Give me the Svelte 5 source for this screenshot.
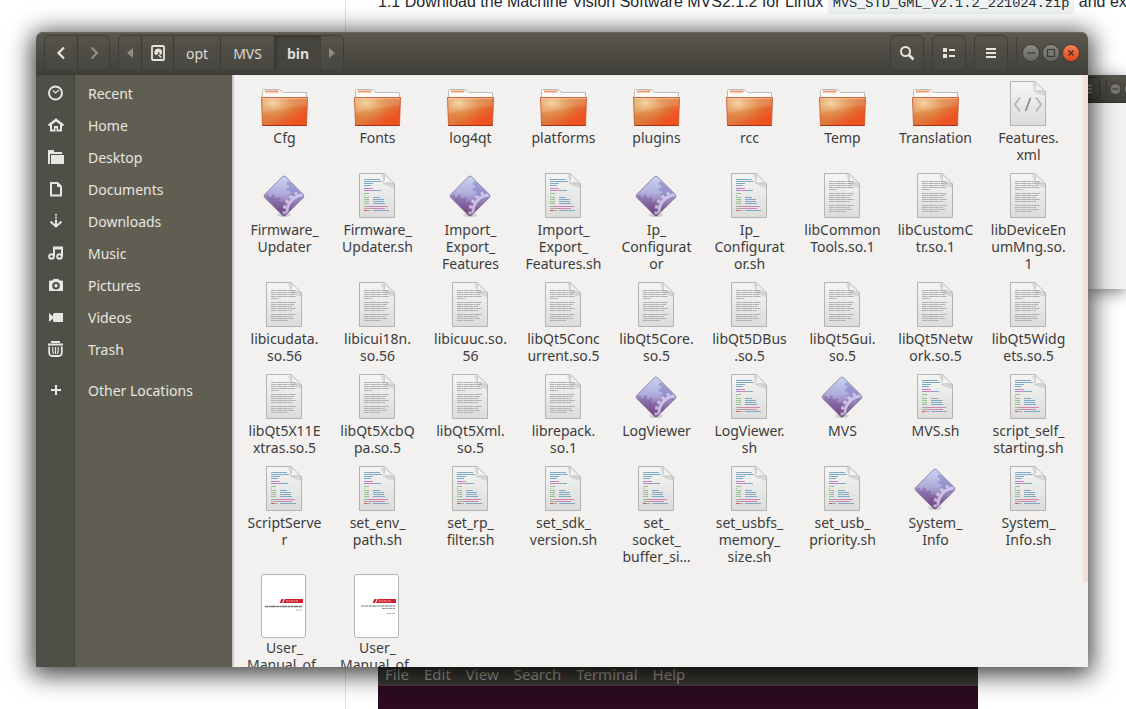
<script>
  const places = [
    ['recent', 'Recent'],
    ['home', 'Home'],
    ['desktop', 'Desktop'],
    ['documents', 'Documents'],
    ['downloads', 'Downloads'],
    ['music', 'Music'],
    ['pictures', 'Pictures'],
    ['videos', 'Videos'],
    ['trash', 'Trash'],
    ['other', 'Other Locations']
  ];

  // kind, then the label split at its line breaks with "|"
  const files = [
    ['folder', 'Cfg'],
    ['folder', 'Fonts'],
    ['folder', 'log4qt'],
    ['folder', 'platforms'],
    ['folder', 'plugins'],
    ['folder', 'rcc'],
    ['folder', 'Temp'],
    ['folder', 'Translation'],
    ['xml', 'Features.|xml'],
    ['app', 'Firmware_|Updater'],
    ['script', 'Firmware_|Updater.sh'],
    ['app', 'Import_|Export_|Features'],
    ['script', 'Import_|Export_|Features.sh'],
    ['app', 'Ip_|Configurat|or'],
    ['script', 'Ip_|Configurat|or.sh'],
    ['text', 'libCommon|Tools.so.1'],
    ['text', 'libCustomC|tr.so.1'],
    ['text', 'libDeviceEn|umMng.so.|1'],
    ['text', 'libicudata.|so.56'],
    ['text', 'libicui18n.|so.56'],
    ['text', 'libicuuc.so.|56'],
    ['text', 'libQt5Conc|urrent.so.5'],
    ['text', 'libQt5Core.|so.5'],
    ['text', 'libQt5DBus|.so.5'],
    ['text', 'libQt5Gui.|so.5'],
    ['text', 'libQt5Netw|ork.so.5'],
    ['text', 'libQt5Widg|ets.so.5'],
    ['text', 'libQt5X11E|xtras.so.5'],
    ['text', 'libQt5XcbQ|pa.so.5'],
    ['text', 'libQt5Xml.|so.5'],
    ['text', 'librepack.|so.1'],
    ['app', 'LogViewer'],
    ['script', 'LogViewer.|sh'],
    ['app', 'MVS'],
    ['script', 'MVS.sh'],
    ['script', 'script_self_|starting.sh'],
    ['script', 'ScriptServe|r'],
    ['script', 'set_env_|path.sh'],
    ['script', 'set_rp_|filter.sh'],
    ['script', 'set_sdk_|version.sh'],
    ['script', 'set_|socket_|buffer_si…'],
    ['script', 'set_usbfs_|memory_|size.sh'],
    ['script', 'set_usb_|priority.sh'],
    ['app', 'System_|Info'],
    ['script', 'System_|Info.sh'],
    ['pdf', 'User_|Manual_of_'],
    ['pdf2', 'User_|Manual_of_']
  ].map(([kind, label]) => ({ kind, lines: label.split('|') }));

  const B = '#7fa9c4', P = '#a884d0', K = '#d183b4', G = '#8bcf86', N = '#a8aaa8', R = '#d8505c';
  // x, y, width, colour
  const code = [
    [10, 9, 16, B], [10, 11, 18, B], [10, 13, 9, B], [10, 15, 7, B],
    [10, 18, 4, P], [14, 18, 5, K], [10, 20, 4, P], [14, 20, 5, K], [19, 20, 8, B],
    [10, 23, 3, G], [13, 23, 2, N], [10, 25, 1, N],
    [10, 27, 3, G], [13, 27, 2, N], [19, 27, 7, B],
    [10, 29, 3, G], [13, 29, 2, N], [19, 29, 11, B],
    [10, 31, 3, G], [13, 31, 2, N], [19, 31, 11, B],
    [10, 33, 3, G], [13, 33, 2, N], [19, 33, 12, B],
    [10, 36, 4, N], [14, 36, 20, K], [10, 38, 7, N], [17, 38, 14, K],
    [10, 40, 3, R], [13, 40, 4, N], [19, 40, 16, B]
  ];
  const prose = [
    [11, 25], [13, 25], [15, 23], [17, 25], [19, 8],
    [23, 25], [25, 23], [27, 21], [29, 25], [31, 21],
    [35, 25], [37, 21], [39, 23], [41, 17]
  ];
  const menus = ['File', 'Edit', 'View', 'Search', 'Terminal', 'Help'];
</script>

{#snippet sheet()}
  <path d="M5 49H42" stroke="#000" stroke-opacity=".1" />
  <path d="M5.500 3.500H30L40.500 14V47.500H5.500Z" fill="url(#paper)" stroke="#b4b4b2" />
  <path d="M27 5L31 15L40 18V14L30 4Z" fill="#000" opacity=".1" />
  <path d="M30 3.500C31 7 30.500 10 29.500 13.500C33 12 37 12.500 40.500 14Z" fill="url(#fold)" stroke="#c0c0be" stroke-width=".8" />
{/snippet}

{#snippet fileIcon(kind)}
  {#if kind === 'pdf' || kind === 'pdf2'}
    <svg class="thumb" width="47" height="64" viewBox="0 0 47 64" aria-hidden="true">
      <rect x=".5" y="2.500" width="44" height="63" rx="2.500" fill="#fff" stroke="#b3b3b0" />
      <path d="M20.500 27H23L21 31H18.500ZM24 27H42V31H22Z" fill="#d0202c" />
      <path d="M25 29H37" stroke="#f0b0b2" stroke-dasharray="2 .5" />
      {#if kind === 'pdf'}
        <path d="M4 34.500H41" stroke="#777" stroke-width="1.500" stroke-dasharray="3 .4 2 .4 5 .5" />
        <path d="M35 38H41" stroke="#aaa" stroke-dasharray="2 .5" />
      {:else}
        <path d="M7 34H41" stroke="#777" stroke-dasharray="3 .5 4 .5" />
        <path d="M28 36.500H41" stroke="#999" stroke-dasharray="3 .5" />
        <path d="M33 41.500H41" stroke="#aaa" stroke-dasharray="2 .4" />
      {/if}
    </svg>
  {:else}
    <svg width="47" height="48" viewBox="0 0 47 48" aria-hidden="true">
      {#if kind === 'folder'}
        <path d="M1.500 20V12.500Q1.500 11.500 2.500 11.500H17.500Q19 11.500 20 13Q21 14.500 22.500 14.500H45.500V20Z" fill="#fafaf9" stroke="#babab7" />
        <path d="M4 13.500H17.500" stroke="#f19a6c" stroke-width="2" />
        <path d="M2 48.500H45" stroke="#000" stroke-opacity=".25" />
        <path d="M.5 19.500H46.500L45.500 47.500H1.500Z" fill="url(#orange)" />
        <path d="M.5 19.500H46.500L45.500 47.500H1.500Z" fill="url(#glow)" stroke="#c2532b" stroke-opacity=".8" />
        <path d="M1 20H46L45.700 28Q22 29 1.300 35.500Z" fill="#fff" opacity=".13" />
        <path d="M1 20.500H46" stroke="#fff" stroke-opacity=".3" />
        <path d="M1.500 47.500H45.500" stroke="#a5301a" />
      {:else if kind === 'app'}
        <ellipse cx="23" cy="45" rx="7" ry="2" fill="#000" opacity=".14" />
        <path d="M21.500 6.700Q23 5.300 24.500 6.700L42.300 24.500Q43.500 26 42.300 27.500L24.500 45.300Q23 46.700 21.500 45.300L3.700 27.500Q2.500 26 3.700 24.500Z" fill="url(#violet)" />
        <g clip-path="url(#diamond)" fill="none">
          <g stroke="#7a76bb" opacity=".5">
            <circle cx="42" cy="16" r="14" fill="#7a76bb" stroke="none" />
            <circle cx="42" cy="16" r="15" stroke-width="3" stroke-dasharray="3 3" />
          </g>
          <g stroke="#6e4b8d" opacity=".4">
            <circle cx="9" cy="41" r="14" fill="#6e4b8d" stroke="none" />
            <circle cx="9" cy="41" r="15" stroke-width="3" stroke-dasharray="3 3" />
          </g>
          <g stroke="#e0d8f6" opacity=".75">
            <circle cx="43" cy="42" r="17" stroke-width="3" />
            <circle cx="43" cy="42" r="20" stroke-width="3" stroke-dasharray="3 3" />
          </g>
        </g>
        <path d="M21.500 6.700Q23 5.300 24.500 6.700L42.300 24.500Q43.500 26 42.300 27.500L24.500 45.300Q23 46.700 21.500 45.300L3.700 27.500Q2.500 26 3.700 24.500Z" fill="none" stroke="#6c5386" stroke-opacity=".8" stroke-width=".8" />
      {:else}
        {@render sheet()}
        {#if kind === 'xml'}
          <path d="M15 19.500L10 26.500L15 33.500M31 19.500L36 26.500L31 33.500" fill="none" stroke="#b7b7b7" stroke-width="2" />
          <path d="M25.500 20L20.500 33" stroke="#858585" stroke-width="1.600" />
        {:else if kind === 'script'}
          {#each code as [x, y, w, color]}
            <rect {x} {y} width={w} height="1" fill={color} />
          {/each}
        {:else}
          {#each prose as [y, w]}
            <path d="M10 {y + 0.5}h{w}" stroke="#b0b0ae" stroke-dasharray="4 .4 2 .4 5 .4" />
          {/each}
        {/if}
      {/if}
    </svg>
  {/if}
{/snippet}

{#snippet placeIcon(kind)}
  <svg width="16" height="16" viewBox="0 0 16 16" fill="none" stroke="#e8e6e3" stroke-width="2" aria-hidden="true">
    {#if kind === 'recent'}
      <circle cx="7.500" cy="8" r="6.500" />
      <path d="M5 5.500L7.500 8L11 5" stroke-width="1.200" />
    {:else if kind === 'home'}
      <path d="M.5 8.500L8 2.500L15.500 8.500" />
      <path d="M2 7L8 3L14 7V14.500H2ZM4 7.500V12.500H6V9H10V12.500H12V7.500L8 4.500Z" fill="#e8e6e3" stroke="none" fill-rule="evenodd" />
      <path d="M6 9H10V14H6Z" fill="#e8e6e3" stroke="none" />
      <path d="M8 11V15" stroke="#4f4e47" stroke-width="1" />
    {:else if kind === 'desktop'}
      <path d="M0 1H6V3H14V5H2V15H0ZM3 6H16V15H3Z" fill="#e8e6e3" stroke="none" />
    {:else if kind === 'documents'}
      <path d="M3 2H9.500L13 5.500V14.500H3Z" />
      <path d="M9 2V6H13Z" fill="#e8e6e3" stroke="none" />
    {:else if kind === 'downloads'}
      <path d="M8 1V8" stroke-dasharray="1.500 1.200" />
      <path d="M8 8V13M2.500 8.500L8 13.500L13.500 8.500" />
    {:else if kind === 'music'}
      <path d="M6 11V2.500H14V11M6 3.500H14" />
      <circle cx="3.500" cy="11.500" r="2.300" />
      <circle cx="11.500" cy="11.500" r="2.300" />
    {:else if kind === 'pictures'}
      <path d="M1 4.500Q1 3.500 2 3.500H4.500L5.500 2H10.500L11.500 3.500H14Q15 3.500 15 4.500V14H1ZM8 5A3.800 3.800 0 1 0 8 12.600A3.800 3.800 0 1 0 8 5Z" fill="#e8e6e3" stroke="none" fill-rule="evenodd" />
      <circle cx="8" cy="8.800" r="1.700" fill="#e8e6e3" stroke="none" />
    {:else if kind === 'videos'}
      <path d="M1 4V13L5 9.500V11.500Q5 13 6.500 13H15V4H6.500Q5 4 5 5.500V7.500Z" fill="#e8e6e3" stroke="none" />
    {:else if kind === 'trash'}
      <path d="M0 3.500H15M3 1H12" />
      <path d="M1.200 5.500V12Q1.500 15 4 15H11Q13.500 15 13.800 12V5.500" stroke-width="1.800" />
      <path d="M5 6Q4 9 5.500 13M7.500 6V13M10 6Q11 9 9.500 13" stroke-width="1.200" />
    {:else}
      <path d="M8 3V13M3 8H13" />
    {/if}
  </svg>
{/snippet}

<svg class="defs" width="0" height="0" aria-hidden="true">
  <defs>
    <linearGradient id="paper" x1="0" y1="0" x2="0" y2="1">
      <stop offset="0" stop-color="#f5f5f4" /><stop offset="1" stop-color="#dcdcdb" />
    </linearGradient>
    <linearGradient id="fold" x1="0" y1="1" x2="1" y2="0">
      <stop offset="0" stop-color="#fff" /><stop offset="1" stop-color="#dededd" />
    </linearGradient>
    <linearGradient id="orange" x1="0" y1="0" x2="1" y2="1">
      <stop offset="0" stop-color="#df9450" /><stop offset=".5" stop-color="#df7a3c" /><stop offset=".8" stop-color="#ee5220" /><stop offset="1" stop-color="#e9501f" />
    </linearGradient>
    <radialGradient id="glow" cx=".25" cy=".2" r=".6">
      <stop offset="0" stop-color="#f5d69f" stop-opacity=".95" /><stop offset="1" stop-color="#e08a40" stop-opacity="0" />
    </radialGradient>
    <linearGradient id="violet" x1="0" y1="0" x2="0" y2="1">
      <stop offset="0" stop-color="#c9d6f4" /><stop offset=".45" stop-color="#b0abda" /><stop offset=".65" stop-color="#967fb6" /><stop offset="1" stop-color="#6b3a6d" />
    </linearGradient>
    <clipPath id="diamond">
      <path d="M23 6L43 26L23 46L3 26Z" />
    </clipPath>
  </defs>
</svg>

<div class="desktop">
  <article class="page">
    <p>1.1 Download the Machine Vision Software MVS2.1.2 for Linux <code>MVS_STD_GML_V2.1.2_221024.zip</code> and extract</p>
  </article>

  <section class="behind">
    <div class="behind-bar">
      <svg width="60" height="27" viewBox="0 0 60 27" aria-hidden="true">
        <path d="M0 2.500H8Q11.500 2.500 11.500 6V21Q11.500 24.500 8 24.500H0" fill="none" stroke="#35342f" />
        <path d="M0 10.500H4M0 14H4M0 17.500H4" stroke="#9a9992" stroke-width="1.500" />
        <path d="M18.500 5V23" stroke="#3a3934" />
        <circle cx="27.500" cy="14" r="5.500" fill="#77766f" stroke="#37362f" />
        <circle cx="41.500" cy="14" r="5.500" fill="#77766f" stroke="#37362f" />
        <path d="M24.500 14H30.500" stroke="#37362f" />
      </svg>
    </div>
  </section>

  <section class="terminal">
    <nav>
      {#each menus as menu}<button>{menu}</button>{/each}
    </nav>
  </section>

  <main class="window">
    <header>
      <div class="group">
        <button class="nav" aria-label="Back">
          <svg width="16" height="16" viewBox="0 0 16 16"><path d="M11 2.500L5.500 8L11 13.500" fill="none" stroke="#e8e5dc" stroke-width="2.200" /></svg>
        </button>
        <button class="nav" aria-label="Forward">
          <svg width="16" height="16" viewBox="0 0 16 16"><path d="M5.500 2.500L11 8L5.500 13.500" fill="none" stroke="#8f8d84" stroke-width="2.200" /></svg>
        </button>
      </div>
      <div class="group path">
        <button class="arrow" aria-label="Scroll path left">
          <svg width="6" height="10" viewBox="0 0 6 10"><path d="M6 0V10L0 5Z" fill="#8f8d84" /></svg>
        </button>
        <button class="disk" aria-label="Computer">
          <svg width="16" height="16" viewBox="0 0 16 16">
            <rect x="2" y="1" width="12" height="14" rx="1" fill="none" stroke="#e8e5dc" stroke-width="1.800" />
            <path d="M8 3.500A3.700 3.700 0 0 0 6 10.300L8.500 8.500L7.500 7.500L9.500 7V9.500L11 9.800A3.700 3.700 0 0 0 8 3.500Z" fill="#e8e5dc" />
            <path d="M8.500 10L11.500 12.500" stroke="#e8e5dc" stroke-width="1.500" />
          </svg>
        </button>
        <button class="crumb">opt</button>
        <button class="crumb">MVS</button>
        <button class="crumb current">bin</button>
        <button class="arrow plain" aria-label="Scroll path right">
          <svg width="6" height="10" viewBox="0 0 6 10"><path d="M0 0V10L6 5Z" fill="#8f8d84" /></svg>
        </button>
      </div>
      <div class="tools">
        <button class="tool" aria-label="Search">
          <svg width="16" height="16" viewBox="0 0 16 16" fill="none" stroke="#e8e5dc"><circle cx="6.500" cy="6.500" r="4.500" stroke-width="2" /><path d="M9.500 9.500L14.500 14.500" stroke-width="2.600" /></svg>
        </button>
        <button class="tool" aria-label="List view">
          <svg width="16" height="16" viewBox="0 0 16 16" fill="#e8e5dc"><path d="M2 3H6V7H2ZM8 4H14V6H8ZM2 9H6V13H2ZM8 10H14V12H8Z" /></svg>
        </button>
        <button class="tool" aria-label="Menu">
          <svg width="16" height="16" viewBox="0 0 16 16" fill="#e8e5dc"><path d="M3 3H13V5H3ZM3 7H13V9H3ZM3 11H13V13H3Z" /></svg>
        </button>
      </div>
      <div class="controls">
        <button aria-label="Minimise"><svg width="16" height="16" viewBox="0 0 16 16"><path d="M4 8H12" stroke="#3c3b37" stroke-width="1.200" /></svg></button>
        <button aria-label="Maximise"><svg width="16" height="16" viewBox="0 0 16 16"><rect x="4.500" y="4.500" width="7" height="7" fill="none" stroke="#3c3b37" stroke-width="1.200" /></svg></button>
        <button class="close" aria-label="Close"><svg width="16" height="16" viewBox="0 0 16 16"><path d="M5.500 5.500L10.500 10.500M10.500 5.500L5.500 10.500" stroke="#4c2a1b" stroke-width="1.300" /></svg></button>
      </div>
    </header>

    <div class="body">
      <aside>
        {#each places as [kind, name]}
          <button class="place" class:apart={kind === 'other'}>
            <span class="glyph">{@render placeIcon(kind)}</span>
            <span>{name}</span>
          </button>
        {/each}
      </aside>
      <div class="files">
        {#each files as file}
          <button class="file">
            {@render fileIcon(file.kind)}
            <span class="label">{#each file.lines as line, i}{#if i}<br />{/if}{line}{/each}</span>
          </button>
        {/each}
      </div>
    </div>
  </main>
</div>

<style>
  :global(body) {
    margin: 0;
    background: #fff;
  }
  .defs {
    position: absolute;
  }
  .desktop {
    position: relative;
    height: 100vh;
    min-height: 480px;
    overflow: hidden;
    font-family: 'Noto Sans', 'Open Sans', sans-serif;
    font-size: 14px;
  }
  button {
    font: inherit;
    color: inherit;
    background: none;
    border: 0;
    padding: 0;
    margin: 0;
  }
  svg {
    display: block;
    flex: none;
  }

  .page {
    height: 100%;
    margin-left: 345px;
    padding-left: 32px;
    border-left: 1px solid #dfe2e5;
    overflow: hidden;
  }
  .page p {
    margin: -10px 0 0;
    font: 16px/24px 'Liberation Sans', Arial, sans-serif;
    color: #24292e;
    white-space: nowrap;
  }
  .page code {
    padding: 3px 5px;
    border-radius: 4px;
    background: #f0f3f3;
    font-family: 'Liberation Mono', monospace;
    font-size: 85%;
  }

  .behind {
    position: absolute;
    left: 1088px;
    right: 0;
    top: 75px;
    height: 214px;
    background: #f2f1f0;
    box-shadow: 0 3px 16px rgba(0, 0, 0, 0.5);
  }
  .behind-bar {
    height: 27px;
    overflow: hidden;
    border-bottom: 1px solid #33322e;
    background: linear-gradient(#55534a, #403f3a);
  }

  .terminal {
    position: absolute;
    left: 378px;
    width: 600px;
    bottom: 0;
    height: 60px;
    background: #2c0a21;
  }
  .terminal nav {
    display: flex;
    align-items: end;
    gap: 15px;
    height: 36px;
    padding-left: 7px;
    border-bottom: 1px solid #43423c;
    background: #3a3934;
    color: #a09f98;
    font-size: 15px;
    line-height: 22px;
  }

  .window {
    position: absolute;
    inset: 32px 38px 42px 36px;
    display: flex;
    flex-direction: column;
    border-radius: 7px 7px 0 0;
    box-shadow: 0 4px 24px 4px rgba(0, 0, 0, 0.75);
    background: #f2f1f0;
  }
  header {
    display: flex;
    align-items: center;
    height: 42px;
    padding: 0 8px;
    border-bottom: 1px solid #3a3934;
    border-radius: 7px 7px 0 0;
    background: linear-gradient(#5b594e, #403f3a);
    box-shadow: inset 0 1px #69675c;
    color: #dfdbd2;
  }
  header button {
    display: flex;
    align-items: center;
    justify-content: center;
  }
  .group,
  .tool {
    height: 34px;
    border: 1px solid #3e3d37;
    border-radius: 5px;
    background: linear-gradient(#55534a, #474640);
  }
  .group {
    display: flex;
    margin-right: 8px;
    overflow: hidden;
  }
  .group button + button {
    border-left: 1px solid #3b3a35;
  }
  .nav {
    width: 32px;
  }
  .group .arrow {
    width: 22px;
  }
  .group button.plain {
    border-left: 0;
  }
  .group .disk {
    width: 32px;
  }
  .crumb {
    padding: 0 12px;
  }
  .crumb.current {
    font-weight: bold;
    background: #45443e;
    box-shadow: inset 1px 1px 3px #33322d;
  }
  .tools {
    display: flex;
    gap: 8px;
    margin-left: auto;
  }
  .tool {
    width: 34px;
    height: 36px;
  }
  .controls {
    display: flex;
    gap: 2px;
    margin-left: 8px;
    padding: 6px 0 6px 5px;
    border-left: 1px solid #403f39;
  }
  .controls button {
    width: 18px;
    height: 18px;
    border: 1px solid #3d3c36;
    border-radius: 50%;
    background: linear-gradient(#8b8a83, #66655f);
  }
  .controls .close {
    background: linear-gradient(#f47e56, #e0491b);
  }

  .body {
    display: flex;
    flex: 1;
    min-height: 0;
  }
  aside {
    flex: none;
    width: 198px;
    box-sizing: border-box;
    padding-top: 2px;
    border-right: 2px solid #cbc9c6;
    background: linear-gradient(90deg, #4f4e47 38px, #45443d 38px, #45443d 39px, #605e52 39px);
    color: #e8e6e0;
  }
  .place {
    display: flex;
    align-items: center;
    width: 100%;
    height: 32px;
    text-align: left;
    gap: 13px;
  }
  .place.apart {
    margin-top: 9px;
  }
  .glyph {
    display: flex;
    justify-content: flex-end;
    width: 28px;
    padding-right: 11px;
  }
  .files {
    flex: 1;
    display: grid;
    grid-template-columns: repeat(auto-fill, minmax(93px, 1fr));
    align-content: start;
    row-gap: 7px;
    padding: 3px 8px 0 4px;
    overflow: hidden;
    background: #f2f1f0;
    border-right: 5px solid;
    border-image: linear-gradient(#f0e0d9 85.500%, #f2f1f0 85.500%) 1;
    color: #3c3c3c;
  }
  .file {
    display: flex;
    flex-direction: column;
    align-items: center;
    gap: 3px;
  }
  .thumb {
    overflow: visible;
  }
  .label {
    line-height: 17px;
    text-align: center;
    white-space: nowrap;
  }
</style>
